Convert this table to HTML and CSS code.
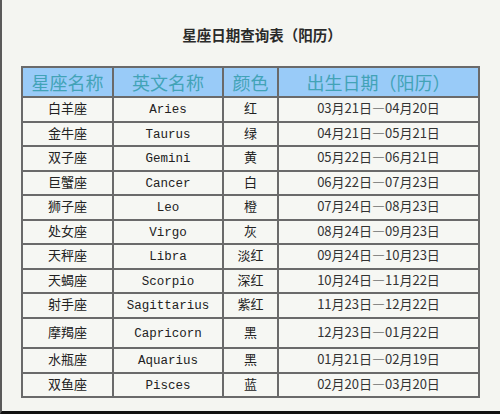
FILE: index.html
```html
<!DOCTYPE html>
<html lang="zh-CN">
<head>
<meta charset="utf-8">
<title>星座日期查询表（阳历）</title>
<link rel="stylesheet" href="styles.css">
</head>
<body>
<div class="page">
  <h1 class="title">星座日期查询表（阳历）</h1>
  <table class="zodiac">
    <thead>
      <tr><th class="c1">星座名称</th><th class="c2">英文名称</th><th class="c3">颜色</th><th class="c4">出生日期（阳历）</th></tr>
    </thead>
    <tbody>
      <tr><td>白羊座</td><td class="en">Aries</td><td>红</td><td class="date">03月21日—04月20日</td></tr>
      <tr><td>金牛座</td><td class="en">Taurus</td><td>绿</td><td class="date">04月21日—05月21日</td></tr>
      <tr><td>双子座</td><td class="en">Gemini</td><td>黄</td><td class="date">05月22日—06月21日</td></tr>
      <tr><td>巨蟹座</td><td class="en">Cancer</td><td>白</td><td class="date">06月22日—07月23日</td></tr>
      <tr><td>狮子座</td><td class="en">Leo</td><td>橙</td><td class="date">07月24日—08月23日</td></tr>
      <tr><td>处女座</td><td class="en">Virgo</td><td>灰</td><td class="date">08月24日—09月23日</td></tr>
      <tr><td>天秤座</td><td class="en">Libra</td><td>淡红</td><td class="date">09月24日—10月23日</td></tr>
      <tr><td>天蝎座</td><td class="en">Scorpio</td><td>深红</td><td class="date">10月24日—11月22日</td></tr>
      <tr><td>射手座</td><td class="en">Sagittarius</td><td>紫红</td><td class="date">11月23日—12月22日</td></tr>
      <tr class="tall"><td>摩羯座</td><td class="en">Capricorn</td><td>黑</td><td class="date">12月23日—01月22日</td></tr>
      <tr><td>水瓶座</td><td class="en">Aquarius</td><td>黑</td><td class="date">01月21日—02月19日</td></tr>
      <tr><td>双鱼座</td><td class="en">Pisces</td><td>蓝</td><td class="date">02月20日—03月20日</td></tr>
    </tbody>
  </table>
</div>
</body>
</html>
```
FILE: styles.css
```css
html, body {
  margin: 0;
  padding: 0;
}
body {
  background: #f4f5f1;
  font-family: "Noto Sans CJK SC", "Noto Sans", sans-serif;
  color: #222;
}
.page {
  width: 500px;
  height: 414px;
  box-sizing: border-box;
  border-left: 2px solid #5a5a5a;
  border-bottom: 3px solid #111;
  padding: 25px 0 0 19px;
}
.title {
  margin: 0 0 21px 0;
  width: 460px;
  padding-left: 22px;
  box-sizing: border-box;
  text-align: center;
  font-size: 14.5px;
  line-height: 20px;
  font-weight: bold;
  color: #2a2a2a;
}
.zodiac {
  border-collapse: collapse;
  width: 459px;
  table-layout: fixed;
  border: 2px solid #6a6a6a;
}
.zodiac th, .zodiac td {
  border: 2px solid #6a6a6a;
  padding: 0;
  text-align: center;
}
.zodiac th {
  background: #99cbf8;
  color: #42a3b7;
  font-weight: normal;
  font-size: 18px;
  height: 28px;
  line-height: 28px;
  vertical-align: middle;
}
.c1 { width: 89px; }
.c2 { width: 108px; }
.c3 { width: 53px; }
.c4 { width: 199px; }
.zodiac td {
  background: #f6f7f3;
  font-size: 13px;
  line-height: 20.5px;
  vertical-align: baseline;
}
.zodiac tr.tall td {
  line-height: 25.5px;
}
.zodiac td.en {
  font-family: "Liberation Mono", monospace;
  font-size: 12.5px;
}
.zodiac td.date {
  font-size: 13px;
  color: #333;
}
```
